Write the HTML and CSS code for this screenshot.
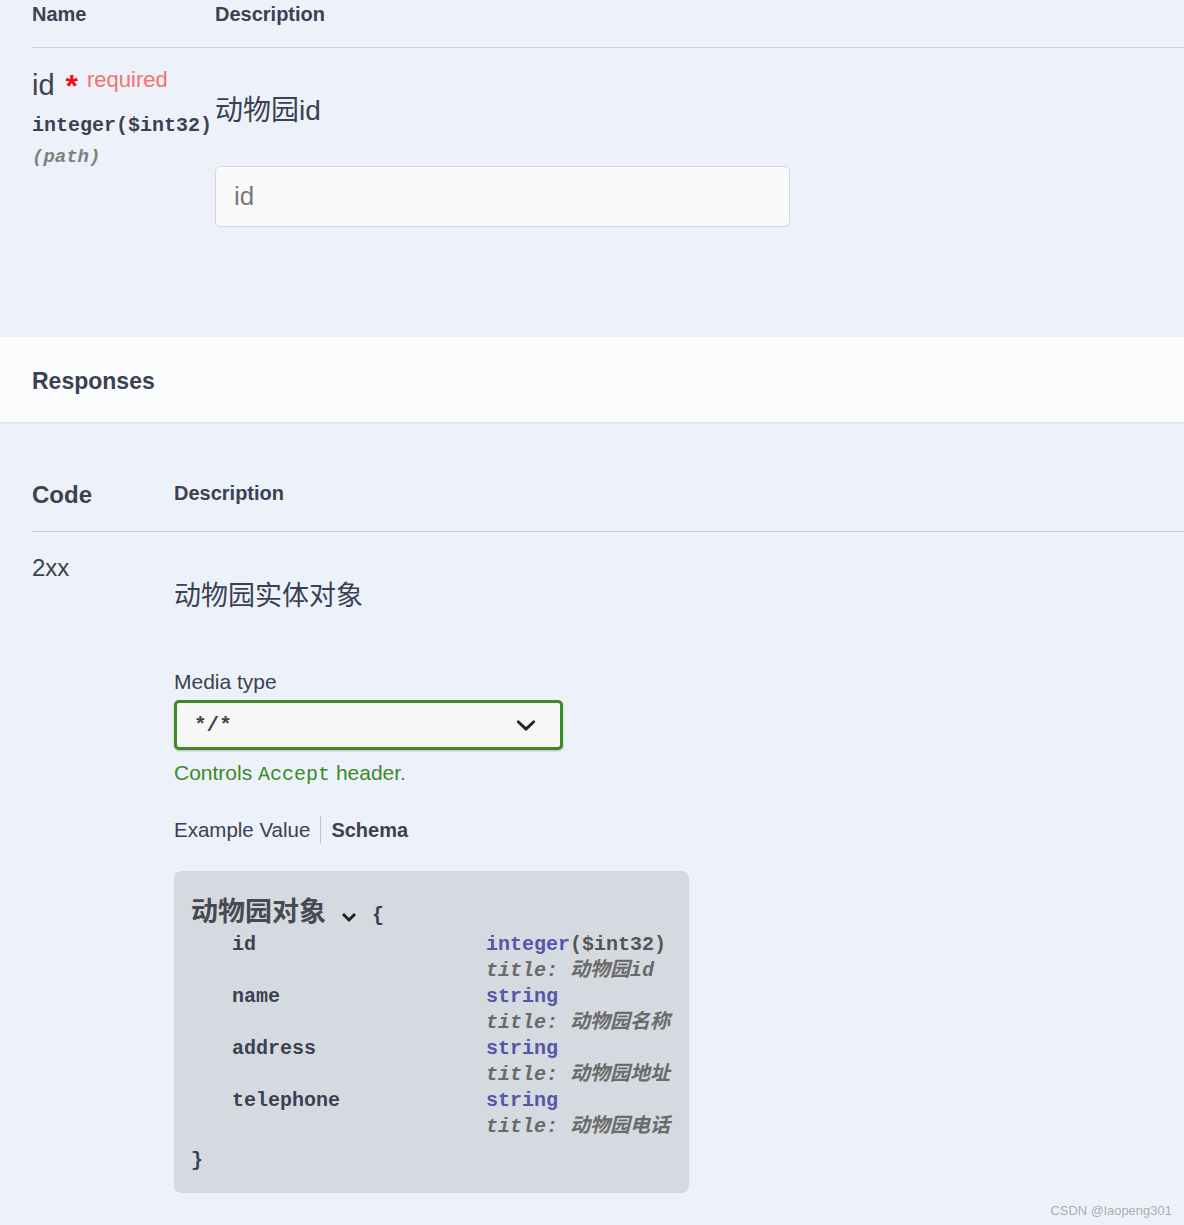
FILE: index.html
```html
<!DOCTYPE html>
<html lang="zh-CN">
<head>
<meta charset="utf-8">
<title>Swagger UI</title>
<link rel="stylesheet" href="styles.css">
</head>
<body>
<div class="page">
  <section class="params">
    <div class="thead">
      <div class="col-name th">Name</div>
      <div class="col-desc th">Description</div>
    </div>
    <div class="param-row">
      <div class="col-name">
        <div class="pname">id<span class="star">*</span><span class="req">required</span></div>
        <div class="ptype">integer<span class="fmt">($int32)</span></div>
        <div class="pin">(path)</div>
      </div>
      <div class="col-desc">
        <p class="pdesc">动物园id</p>
        <input class="pinput" type="text" placeholder="id">
      </div>
    </div>
  </section>

  <div class="resp-header"><h4>Responses</h4></div>

  <section class="responses">
    <div class="rthead">
      <div class="rcol-code th-code">Code</div>
      <div class="rcol-desc th th-desc">Description</div>
    </div>
    <div class="rrow">
      <div class="rcol-code code">2xx</div>
      <div class="rcol-desc">
        <p class="rdesc">动物园实体对象</p>
        <div class="media-label">Media type</div>
        <div class="select">
          <span class="select-val">*/*</span>
          <svg class="select-arrow" width="40" height="40" viewBox="0 0 20 20"><path fill="#222" d="M13.418 7.859a.695.695 0 01.978 0 .68.68 0 010 .969l-3.908 3.83a.697.697 0 01-.979 0l-3.908-3.83a.68.68 0 010-.969.695.695 0 01.978 0L10 11l3.418-3.141z"/></svg>
        </div>
        <div class="accept-msg">Controls <code>Accept</code> header.</div>
        <div class="tabs"><span class="tab">Example Value</span><span class="tab active">Schema</span></div>
        <div class="model-box">
          <div class="model-title"><span class="mt-name">动物园对象</span><svg class="mt-toggle" width="16" height="12" viewBox="0 0 16 12"><polyline points="2,3 8,9 14,3" fill="none" stroke="#222" stroke-width="3"/></svg><span class="brace">{</span></div>
          <div class="props">
            <div class="pn">id</div>
            <div class="pt"><div><span class="ty">integer</span><span class="pf">($int32)</span></div><div class="ti">title: 动物园id</div></div>
            <div class="pn">name</div>
            <div class="pt"><div><span class="ty">string</span></div><div class="ti">title: 动物园名称</div></div>
            <div class="pn">address</div>
            <div class="pt"><div><span class="ty">string</span></div><div class="ti">title: 动物园地址</div></div>
            <div class="pn">telephone</div>
            <div class="pt"><div><span class="ty">string</span></div><div class="ti">title: 动物园电话</div></div>
          </div>
          <div class="brace-end">}</div>
        </div>
      </div>
    </div>
  </section>
</div>
<div class="watermark">CSDN @laopeng301</div>
</body>
</html>
```

FILE: styles.css
```css
html, body {
  margin: 0;
  padding: 0;
}
body {
  background: #edf2fa;
  font-family: "Liberation Sans", "Noto Sans CJK SC", sans-serif;
  color: #3b4151;
  position: relative;
  min-height: 1225px;
  overflow: hidden;
}

/* ---------- parameters ---------- */
.params {
  padding: 2px 0 110px 32px;
}
.thead {
  display: flex;
  border-bottom: 1px solid #c9ced7;
  padding-bottom: 21px;
}
.th {
  font-size: 20px;
  font-weight: 700;
  line-height: 24px;
}
.col-name {
  width: 183px;
  flex: none;
}
.col-desc {
  flex: 1;
}
.param-row {
  display: flex;
  padding-top: 20px;
}
.pname {
  font-size: 29px;
  line-height: 32px;
  height: 32px;
  white-space: nowrap;
}
.star {
  color: #f01010;
  font-size: 32px;
  font-weight: 700;
  margin-left: 11px;
  position: relative;
  top: 2px;
}
.req {
  font-size: 22px;
  color: #f2736f;
  position: relative;
  top: -8px;
  margin-left: 9px;
}
.ptype {
  font-family: "Liberation Mono", "Noto Sans CJK SC", monospace;
  font-weight: 700;
  font-size: 20px;
  line-height: 24px;
  margin-top: 14px;
  white-space: nowrap;
}
.pin {
  font-family: "Liberation Mono", monospace;
  font-weight: 700;
  font-style: italic;
  font-size: 19px;
  line-height: 24px;
  margin-top: 7px;
  color: #808080;
}
.pdesc {
  margin: 25px 0 0;
  font-size: 28px;
  line-height: 36px;
}
.pinput {
  display: block;
  margin-top: 37px;
  width: 575px;
  height: 61px;
  box-sizing: border-box;
  border: 1px solid #d6d6d6;
  border-radius: 5px;
  background: #fafafa;
  padding: 0 18px;
  font-size: 26px;
  font-family: "Liberation Sans", sans-serif;
  color: #3b4151;
  outline: none;
}
.pinput::placeholder {
  color: #7a7a7a;
}

/* ---------- responses header ---------- */
.resp-header {
  position: relative;
  z-index: 1;
  background: #fbfcfe;
  box-shadow: 0 1px 2px rgba(0, 0, 0, 0.1);
  padding: 30px 32px 27px;
}
.resp-header h4 {
  margin: 0;
  font-size: 23px;
  line-height: 28px;
  font-weight: 700;
}

/* ---------- responses table ---------- */
.responses {
  padding: 58px 0 33px 32px;
}
.rthead {
  display: flex;
  align-items: flex-start;
  border-bottom: 1px solid #c9ced7;
  padding-bottom: 21px;
}
.rcol-code {
  width: 142px;
  flex: none;
}
.rcol-desc {
  flex: 1;
}
.th-code {
  font-size: 24px;
  font-weight: 700;
  line-height: 30px;
}
.th-desc {
  padding-top: 1px;
}
.rrow {
  display: flex;
  padding-top: 21px;
}
.code {
  font-size: 24px;
  line-height: 30px;
}
.rdesc {
  margin: 26px 0 0;
  font-size: 27px;
  line-height: 34px;
}
.media-label {
  margin-top: 57px;
  font-size: 21px;
  line-height: 24px;
}
.select {
  margin-top: 6px;
  width: 389px;
  height: 50px;
  box-sizing: border-box;
  border: 3px solid #3d8b24;
  border-radius: 5px;
  background: #f7f7f7;
  box-shadow: 0 1px 2px rgba(0, 0, 0, 0.25);
  display: flex;
  align-items: center;
  justify-content: space-between;
  padding: 0 14px 0 17px;
}
.select-val {
  font-family: "Liberation Mono", monospace;
  font-weight: 700;
  font-size: 21px;
  color: #3b4151;
}
.select-arrow {
  display: block;
}
.accept-msg {
  margin-top: 11px;
  font-size: 21px;
  line-height: 24px;
  color: #3c8a28;
}
.accept-msg code {
  font-family: "Liberation Mono", monospace;
  font-size: 20px;
  line-height: 1;
}
.tabs {
  margin-top: 31px;
  display: flex;
  font-size: 20.5px;
  line-height: 28px;
}
.tab {
  padding-right: 10px;
  border-right: 1px solid #c2c6ce;
}
.tab.active {
  padding-left: 10px;
  padding-right: 0;
  border-right: none;
  font-weight: 700;
  font-size: 20px;
}

/* ---------- model box ---------- */
.model-box {
  margin-top: 27px;
  width: 515px;
  box-sizing: border-box;
  padding: 24px 17px 19px;
  background: #d5dae1;
  border-radius: 7px;
}
.model-title {
  line-height: 34px;
  height: 34px;
  white-space: nowrap;
}
.mt-name {
  font-size: 27px;
  font-weight: 700;
  color: #474a52;
}
.mt-toggle {
  margin: 0 15px 0 15px;
  vertical-align: middle;
}
.brace, .brace-end {
  font-family: "Liberation Mono", monospace;
  font-weight: 700;
  font-size: 20px;
  color: #3b4151;
}
.props {
  margin: 3px 0 0 41px;
  display: grid;
  grid-template-columns: 254px auto;
  font-family: "Liberation Mono", "Noto Sans CJK SC", monospace;
  font-weight: 700;
  font-size: 20px;
  line-height: 26px;
  color: #3b4151;
}
.pn {
  white-space: nowrap;
}
.pt {
  white-space: nowrap;
}
.ty {
  color: #5555aa;
}
.pf {
  color: #555;
}
.ti {
  font-style: italic;
  color: #6a6a6a;
}
.brace-end {
  margin-top: 8px;
  line-height: 26px;
}

/* ---------- watermark ---------- */
.watermark {
  position: absolute;
  right: 12px;
  bottom: 8px;
  font-size: 13px;
  color: #a8abb0;
  text-shadow: 1px 0 0 rgba(255, 255, 255, 0.7);
  font-family: "Liberation Sans", sans-serif;
}
```
